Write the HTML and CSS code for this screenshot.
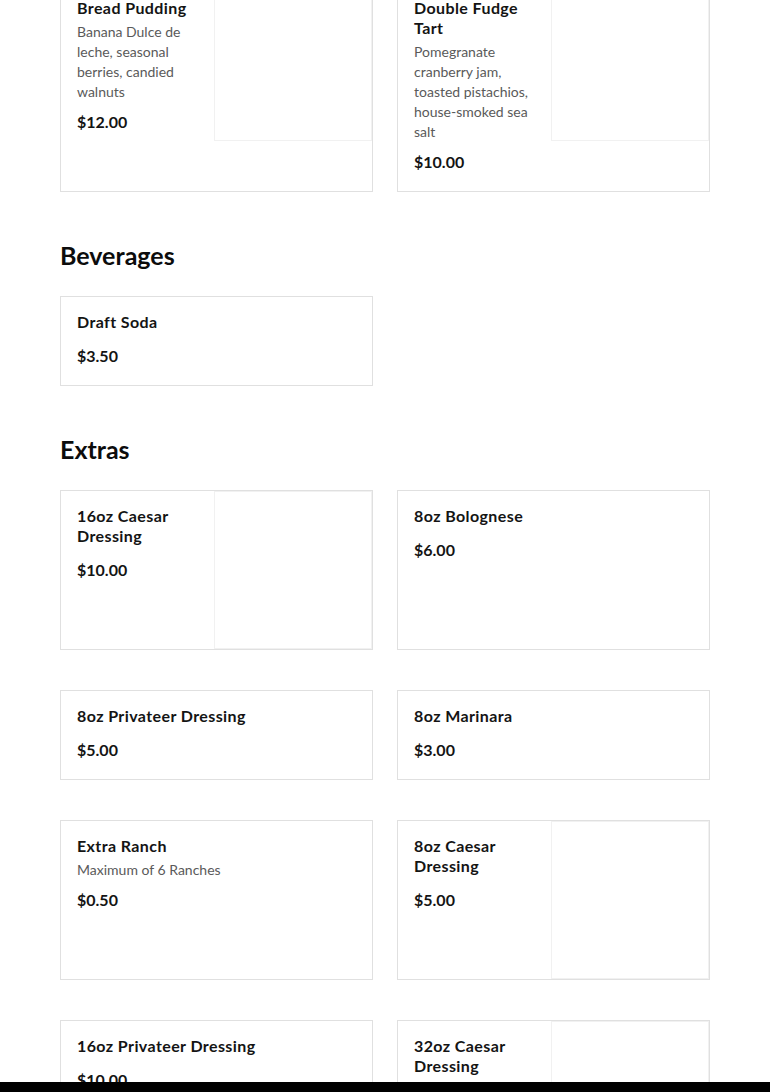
FILE: index.html
```html
<!DOCTYPE html>
<html lang="en">
<head>
<meta charset="utf-8">
<title>Menu</title>
<link rel="stylesheet" href="styles.css">
</head>
<body>
<main class="menu">
  <section class="section">
    <div class="grid">
      <article class="card has-img">
        <div class="info">
          <h3 class="title">Bread Pudding</h3>
          <p class="desc">Banana Dulce de leche, seasonal berries, candied walnuts</p>
          <p class="price">$12.00</p>
        </div>
        <div class="img"></div>
      </article>
      <article class="card has-img">
        <div class="info">
          <h3 class="title">Double Fudge Tart</h3>
          <p class="desc">Pomegranate cranberry jam, toasted pistachios, house-smoked sea salt</p>
          <p class="price">$10.00</p>
        </div>
        <div class="img"></div>
      </article>
    </div>
  </section>

  <section class="section">
    <h2 class="heading">Beverages</h2>
    <div class="grid">
      <article class="card">
        <div class="info">
          <h3 class="title">Draft Soda</h3>
          <p class="price">$3.50</p>
        </div>
      </article>
    </div>
  </section>

  <section class="section">
    <h2 class="heading">Extras</h2>
    <div class="grid">
      <article class="card has-img">
        <div class="info">
          <h3 class="title">16oz Caesar Dressing</h3>
          <p class="price">$10.00</p>
        </div>
        <div class="img"></div>
      </article>
      <article class="card">
        <div class="info">
          <h3 class="title">8oz Bolognese</h3>
          <p class="price">$6.00</p>
        </div>
      </article>
      <article class="card">
        <div class="info">
          <h3 class="title">8oz Privateer Dressing</h3>
          <p class="price">$5.00</p>
        </div>
      </article>
      <article class="card">
        <div class="info">
          <h3 class="title">8oz Marinara</h3>
          <p class="price">$3.00</p>
        </div>
      </article>
      <article class="card">
        <div class="info">
          <h3 class="title">Extra Ranch</h3>
          <p class="desc">Maximum of 6 Ranches</p>
          <p class="price">$0.50</p>
        </div>
      </article>
      <article class="card has-img">
        <div class="info">
          <h3 class="title">8oz Caesar Dressing</h3>
          <p class="price">$5.00</p>
        </div>
        <div class="img"></div>
      </article>
      <article class="card">
        <div class="info">
          <h3 class="title">16oz Privateer Dressing</h3>
          <p class="price">$10.00</p>
        </div>
      </article>
      <article class="card has-img">
        <div class="info">
          <h3 class="title">32oz Caesar Dressing</h3>
          <p class="price">$10.00</p>
        </div>
        <div class="img"></div>
      </article>
    </div>
  </section>
</main>
<div class="bottom-bar"></div>
</body>
</html>
```

FILE: styles.css
```css
* {
  box-sizing: border-box;
}

html, body {
  margin: 0;
  padding: 0;
  background: #ffffff;
}

body {
  font-family: Lato, "Open Sans", "Liberation Sans", sans-serif;
  color: #111;
}

.menu {
  width: 650px;
  margin: -18px auto 0;
}

.section {
  margin-bottom: 48px;
}

.heading {
  margin: 0 0 26px;
  font-size: 25px;
  line-height: 30px;
  font-weight: 700;
  color: #0c0c0c;
}

.grid {
  display: grid;
  grid-template-columns: 1fr 1fr;
  column-gap: 24px;
  row-gap: 40px;
}

.card {
  display: flex;
  align-items: flex-start;
  border: 1px solid #e0e0e0;
  background: #fff;
}

.info {
  flex: 1;
  min-width: 0;
  padding: 15px 16px 19px;
}

.has-img .info {
  padding-right: 12px;
}

.title {
  margin: 0 0 4px;
  font-size: 16px;
  line-height: 20px;
  font-weight: 700;
  letter-spacing: 0.4px;
  color: #141414;
}

.desc {
  margin: 0 0 10px;
  font-size: 14px;
  line-height: 20px;
  color: #5a5a5a;
}

.price {
  margin: 14px 0 0;
  font-size: 16px;
  line-height: 20px;
  font-weight: 700;
  color: #141414;
}

.desc + .price {
  margin-top: 0;
}

.img {
  flex: 0 0 158px;
  width: 158px;
  height: 158px;
  border: 1px solid #f1f1f1;
  background: #fff;
}

.bottom-bar {
  position: fixed;
  left: 0;
  right: 0;
  bottom: 0;
  height: 10px;
  background: #000;
}
```
